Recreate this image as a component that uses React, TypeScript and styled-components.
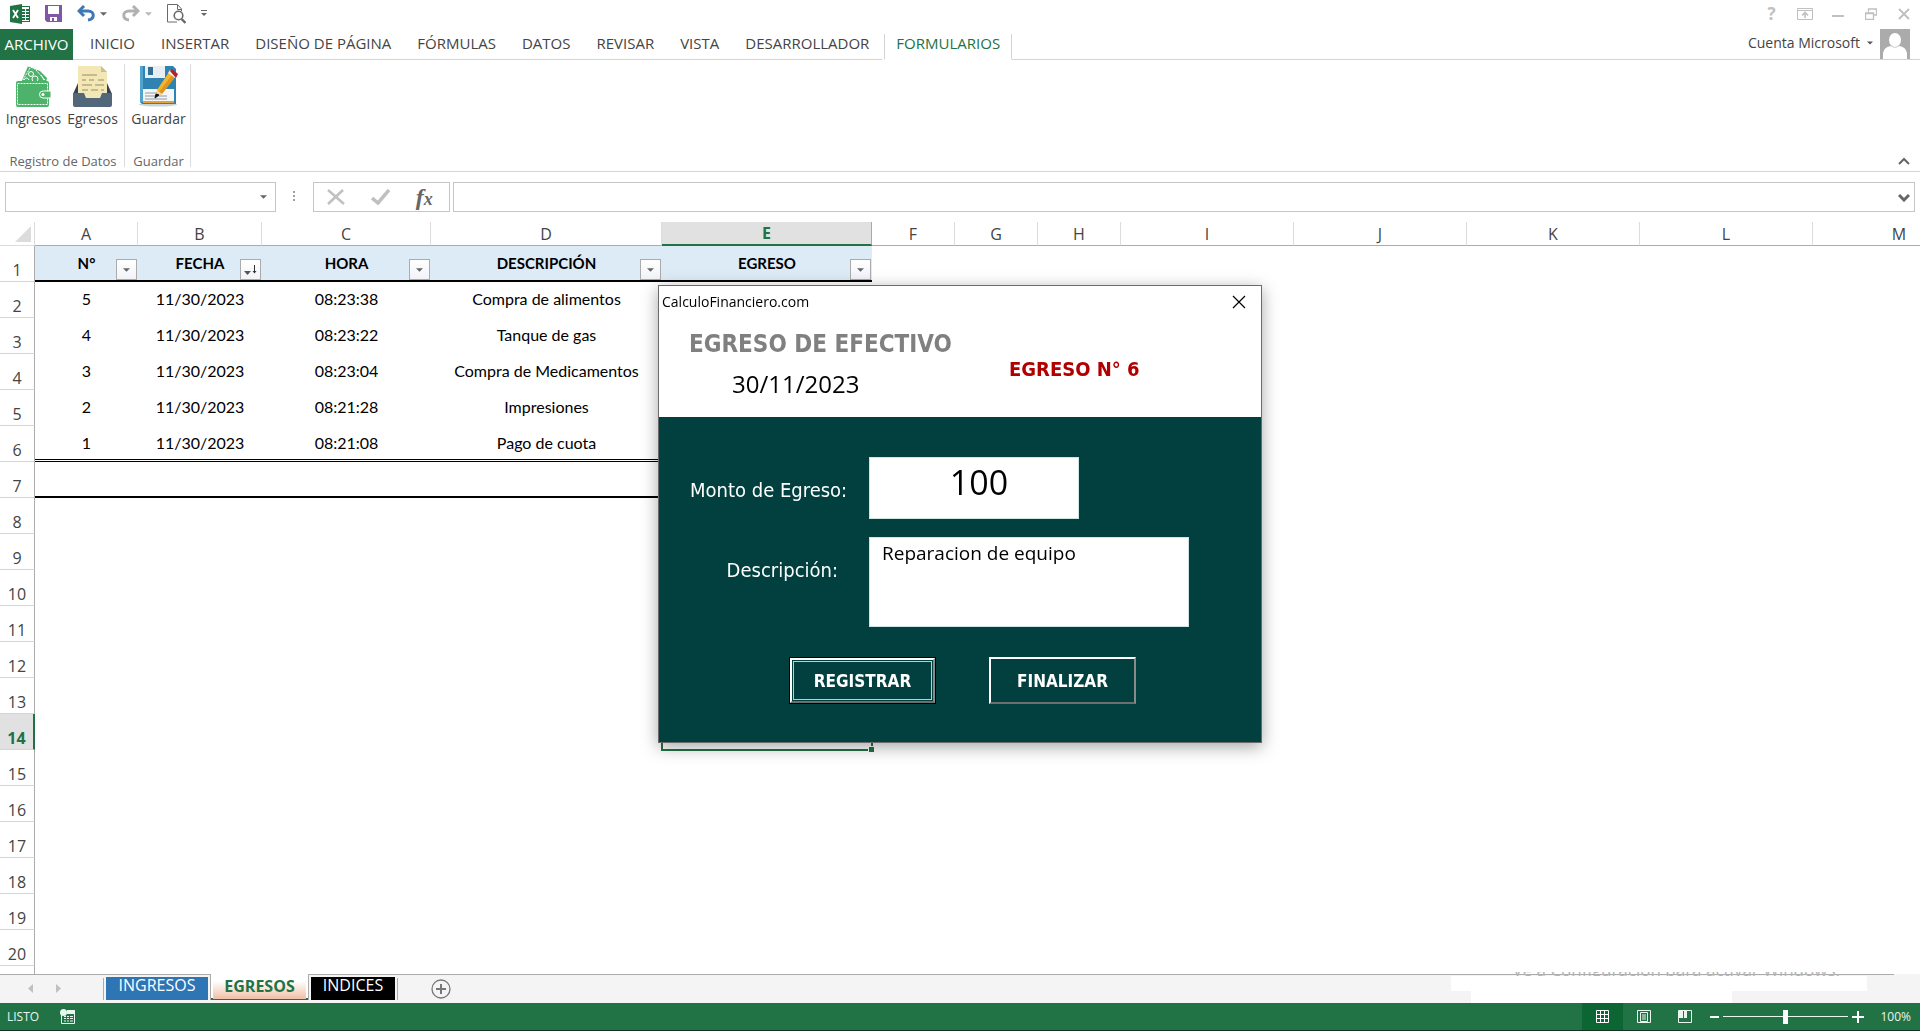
import React from "react";
import styled, { createGlobalStyle, css } from "styled-components";

const ui = `"Open Sans", "Noto Sans", sans-serif`;
const cellFont = `Lato, "Open Sans", sans-serif`;
const formFont = `"DejaVu Sans Condensed", "Noto Sans", sans-serif`;
const green = "#217346";
const teal = "#023f3f";

const Global = createGlobalStyle`
  *, *::before, *::after { box-sizing: border-box; }
  body { margin: 0; background: #fff; font-family: ${ui}; color: #444; overflow: hidden; }
  button, input, textarea { font: inherit; color: inherit; margin: 0; padding: 0; border: 0; background: none; border-radius: 0; outline: 0; }
  svg { display: block; flex: none; }
`;

const Window = styled.div`
  display: flex;
  flex-direction: column;
  height: 100vh;
  min-width: 1300px;
`;

/* ---------- title bar ---------- */
const TitleBar = styled.header`
  display: flex;
  justify-content: space-between;
  height: 29px;
  padding: 0 0 0 8px;
  flex: none;
`;
const QuickAccess = styled.div`
  display: flex;
  align-items: center;
  padding: 0 0 2px 2px;
  gap: 15px;
`;
const Pair = styled.div`
  display: flex;
  align-items: center;
  gap: 5px;
`;
const WindowButtons = styled.div`
  display: flex;
  align-items: center;
  padding-bottom: 2px;
  color: #c0c0c0;
`;
const IconButton = styled.button<{ $w?: number }>`
  display: grid;
  place-items: center;
  width: ${(p) => (p.$w ? `${p.$w}px` : "auto")};
  height: 27px;
`;
const HelpMark = styled.span`
  font: 700 17px/20px ${ui};
`;

/* ---------- ribbon tabs ---------- */
const TabRow = styled.nav`
  display: flex;
  height: 31px;
  flex: none;
`;
const FileTab = styled.button`
  width: 73px;
  background: ${green};
  color: #fff;
  font-size: 15px;
  line-height: 28px;
  padding-bottom: 2px;
`;
const TabList = styled.div`
  display: flex;
`;
const RibbonTab = styled.button<{ $active?: boolean }>`
  padding: 0 13px 2px;
  font-size: 15px;
  line-height: 28px;
  border-bottom: 1px solid #d4d4d4;
  ${(p) =>
    p.$active &&
    css`
      color: ${green};
      border: 1px solid #d4d4d4;
      border-top: 0;
      border-bottom-color: transparent;
      margin: 5px 0 0 2px;
      line-height: 18px;
      padding: 0 11px 7px;
    `}
`;
const TabLine = styled.div`
  flex: 1;
  display: flex;
  justify-content: flex-end;
  align-items: center;
  gap: 7px;
  padding-right: 10px;
  border-bottom: 1px solid #d4d4d4;
`;
const TabGap = styled.div`
  width: 4px;
  border-bottom: 1px solid #d4d4d4;
`;
const Account = styled.button`
  display: flex;
  align-items: center;
  gap: 7px;
  font-size: 14px;
  line-height: 20px;
  padding-bottom: 2px;
`;

/* ---------- ribbon body ---------- */
const Ribbon = styled.section`
  display: flex;
  height: 112px;
  flex: none;
  padding-top: 4px;
  border-bottom: 1px solid #d4d4d4;
`;
const Group = styled.div`
  display: flex;
  flex-direction: column;
  justify-content: space-between;
  height: 103px;
  padding: 2px 2px 0 4px;
  border-right: 1px solid #dcdcdc;
`;
const GroupButtons = styled.div`
  display: flex;
`;
const BigButton = styled.button`
  display: flex;
  flex-direction: column;
  align-items: center;
  gap: 2px;
  width: 59px;
  font-size: 14px;
  line-height: 20px;
`;
const GroupLabel = styled.div`
  font-size: 13px;
  line-height: 12px;
  color: #666;
  text-align: center;
`;
const RibbonEnd = styled.div`
  flex: 1;
  display: flex;
  align-items: flex-end;
  justify-content: flex-end;
  padding: 0 10px 6px 0;
`;

/* ---------- formula bar ---------- */
const FormulaBar = styled.section`
  display: flex;
  height: 50px;
  flex: none;
  padding: 10px 5px;
`;
const Box = styled.div<{ $w?: number }>`
  display: flex;
  align-items: center;
  height: 30px;
  border: 1px solid #c6c6c6;
  ${(p) => (p.$w ? `width: ${p.$w}px;` : "flex: 1; margin-left: 3px;")}
  input { flex: 1; min-width: 0; height: 28px; padding: 0 6px; font-size: 15px; }
  > button:last-child { margin-right: ${(p) => (p.$w ? 4 : 3)}px; }
`;
const Dots = styled.div`
  display: flex;
  flex-direction: column;
  gap: 2px;
  width: 37px;
  align-items: center;
  padding: 9px 1px 0 0;
  i { width: 2px; height: 2px; background: #a0a0a0; }
`;
const Fx = styled.span`
  font: italic 700 24px/26px "Liberation Serif", serif;
  color: #666;
  small { font-size: 18px; }
`;

/* ---------- sheet ---------- */
const SheetArea = styled.main`
  flex: 1;
  min-height: 0;
  overflow: hidden;
`;
const Grid = styled.table`
  table-layout: fixed;
  width: 1986px;
  border-collapse: separate;
  border-spacing: 0;
  td, th { padding: 0; }
`;
const ColHead = styled.th<{ $on?: boolean }>`
  height: 24px;
  font: 400 16px/22px ${ui};
  border-bottom: 1px solid #ababab;
  border-right: 1px solid #dcdcdc;
  ${(p) =>
    p.$on &&
    css`
      background: #e1e1e1;
      color: ${green};
      font-weight: 700;
      border-bottom: 2px solid ${green};
      border-right-color: #ababab;
      line-height: 21px;
    `}
`;
const Corner = styled.td`
  height: 24px;
  border-bottom: 1px solid #dcdcdc;
  border-right: 1px solid #dcdcdc;
  svg { margin: 0 0 0 15px; }
`;
const RowHead = styled.th<{ $on?: boolean }>`
  height: 36px;
  vertical-align: bottom;
  font: 400 16px/21px ${ui};
  border-bottom: 1px solid #d4d4d4;
  border-right: 1px solid #ababab;
  ${(p) =>
    p.$on &&
    css`
      background: #e1e1e1;
      color: ${green};
      font-weight: 700;
      border-right: 2px solid ${green};
    `}
`;
const Cell = styled.td<{ $line?: string }>`
  && { padding-bottom: ${(p) => (p.$line ? 0 : 2)}px; }
  height: 36px;
  text-align: center;
  font: 400 16px/20px ${cellFont};
  color: #000;
  border-bottom: ${(p) => p.$line || "0"};
`;
const TitleCell = styled.td`
  position: relative;
  height: 36px;
  text-align: center;
  background: #ddebf7;
  border-bottom: 2px solid #000;
  font: 700 15px/20px ${cellFont};
  color: #000;
`;
const FilterButton = styled.button`
  position: absolute;
  right: 1px;
  bottom: 0;
  display: grid;
  place-items: center;
  width: 21px;
  height: 21px;
  border: 1px solid #ababab;
  background: linear-gradient(#fff, #f1f3f8);
`;
const SelectedCell = styled.td`
  position: relative;
  height: 36px;
  &::before { content: ""; position: absolute; inset: -2px -1px -1px -1px; border: 2px solid ${green}; }
  &::after {
    content: ""; position: absolute; right: -3px; bottom: -3px; width: 7px; height: 7px;
    background: ${green}; border: 1px solid #fff;
  }
`;

/* ---------- sheet tabs ---------- */
const TabStrip = styled.div`
  position: relative;
  display: flex;
  flex: none;
  height: 29px;
  background: #f4f4f5;
`;
const StripMain = styled.div`
  flex: 1;
  display: flex;
  border-top: 1px solid #ababab;
  margin-right: 26px;
`;
const Arrows = styled.div`
  display: flex;
  width: 103px;
  padding-left: 16px;
  button { width: 28px; height: 27px; display: grid; place-items: center; }
`;
const Divider = styled.span`
  width: 1px;
  height: 22px;
  margin-top: 3px;
  background: #ababab;
`;
const SheetTab = styled.button<{ $bg: string; $w: number }>`
  width: ${(p) => p.$w}px;
  height: 23px;
  margin: 2px 2px 0;
  padding-bottom: 6px;
  background: ${(p) => p.$bg};
  color: #fff;
  font-size: 16px;
  line-height: 17px;
`;
const ActiveTab = styled.button`
  width: 99px;
  height: 26px;
  margin-top: -1px;
  padding: 3px 2px 1px;
  background: #fff;
  border: solid #ababab;
  border-width: 0 1px;
  box-shadow: inset 0 -2px ${green};
  color: ${green};
  font-weight: 700;
  font-size: 16px;
  span { display: block; height: 21px; line-height: 16px; background: linear-gradient(#fff 15%, #f0bfa6); }
`;
const AddSheet = styled.button`
  margin-left: 33px;
  height: 27px;
`;
const Patch = styled.div<{ $right: number; $top: number; $w: number; $h: number }>`
  position: absolute;
  right: ${(p) => p.$right}px;
  top: ${(p) => p.$top}px;
  width: ${(p) => p.$w}px;
  height: ${(p) => p.$h}px;
  background: #fff;
`;
const Notice = styled.div`
  position: absolute;
  right: 80px;
  top: -2px;
  height: 4px;
  overflow: hidden;
  display: flex;
  align-items: flex-end;
  font-size: 17px;
  line-height: 12px;
  color: #b4b4b4;
  white-space: nowrap;
`;

/* ---------- status bar ---------- */
const StatusBar = styled.footer`
  display: flex;
  align-items: center;
  flex: none;
  height: 28px;
  padding: 0 9px 0 7px;
  background: ${green};
  border-bottom: 1px solid #16301f;
  color: #e9f5ee;
  font-size: 12px;
`;
const StatusLeft = styled.div`
  display: flex;
  align-items: center;
  gap: 21px;
  flex: 1;
`;
const ViewButton = styled.button<{ $on?: boolean }>`
  display: grid;
  place-items: center;
  width: 41px;
  height: 27px;
  background: ${(p) => (p.$on ? "#0b6634" : "none")};
`;
const Zoom = styled.div`
  display: flex;
  align-items: center;
  gap: 4px;
  padding-left: 5px;
  label { width: 43px; text-align: right; }
  input { appearance: none; width: 125px; height: 14px; background: linear-gradient(#e9f5ee, #e9f5ee) center / 100% 1px no-repeat; }
  input::-webkit-slider-thumb { appearance: none; width: 5px; height: 14px; background: #fff; }
`;

/* ---------- dialog ---------- */
const Overlay = styled.div`
  position: fixed;
  inset: 0;
  display: grid;
  place-items: center;
  padding-bottom: 3px;
`;
const Dialog = styled.section`
  width: 604px;
  background: #fff;
  border: 1px solid #6b6b6b;
  box-shadow: 0 4px 16px rgba(0, 0, 0, 0.35);
  font-family: ${formFont};
  color: #000;
`;
const DialogBar = styled.div`
  display: flex;
  justify-content: space-between;
  align-items: center;
  height: 31px;
  padding: 0 15px 0 3px;
  font: 14px/20px ${ui};
`;
const DialogHead = styled.div`
  display: grid;
  grid-template-columns: 320px 1fr;
  align-items: center;
  height: 100px;
  padding: 0 30px 8px;
`;
const DialogTitle = styled.h1`
  margin: 2px 0 8px;
  font-size: 24px;
  line-height: 32px;
  font-weight: 700;
  color: #808080;
  white-space: nowrap;
`;
const DialogDate = styled.div`
  padding-left: 43px;
  font: 24px/32px ${ui};
`;
const DialogNumber = styled.div`
  font-size: 20px;
  line-height: 26px;
  font-weight: 700;
  color: #b00000;
  padding-top: 12px;
`;
const Form = styled.form`
  display: flex;
  flex-direction: column;
  gap: 18px;
  padding: 40px 31px 38px;
  background: ${teal};
`;
const Field = styled.div<{ $top?: boolean }>`
  display: grid;
  grid-template-columns: 179px 1fr;
  align-items: ${(p) => (p.$top ? "start" : "center")};
  label {
    color: #fff;
    font-size: 20px;
    line-height: 26px;
    text-align: right;
    white-space: nowrap;
    padding: ${(p) => (p.$top ? "20px 31px 0 0" : "3px 25px 0 0")};
  }
`;
const Amount = styled.input`
  width: 210px;
  height: 62px;
  padding: 0 0 12px 10px;
  background: #fff;
  border: 1px solid #cfe5e3;
  text-align: center;
  font: 34px/48px ${ui};
`;
const Description = styled.textarea`
  width: 320px;
  height: 90px;
  padding: 2px 12px;
  background: #fff;
  border: 1px solid #cfe5e3;
  resize: none;
  font: 19px/26px ${ui};
`;
const Actions = styled.div`
  display: flex;
  gap: 53px;
  padding: 12px 0 0 99px;
`;
const ActionButton = styled.button<{ $focus?: boolean }>`
  position: relative;
  width: 147px;
  height: 47px;
  color: #fff;
  font-size: 17px;
  font-weight: 700;
  border: 2px solid;
  border-color: #fff #8a8a8a #6e6e6e #fff;
  ${(p) =>
    p.$focus &&
    css`
      outline: 1px solid #000;
      outline-offset: -1px;
      border-width: 3px;
      &::after { content: ""; position: absolute; inset: 1px; border: 1px solid #c9c9c9; }
    `}
`;

const Caret = ({ c = "#666", s = 7 }: { c?: string; s?: number }) => (
  <svg width={s} height="4" viewBox="0 0 8 4"><path d="M0 0h8L4 4z" fill={c} /></svg>
);

const ExcelLogo = () => (
  <svg width="20" height="20" viewBox="0 0 20 20">
    <rect x="10.500" y="2.500" width="9" height="15" fill="#fff" stroke={green} />
    <path d="M12 5h3v2h-3zM16 5h3v2h-3zM12 8h3v2h-3zM16 8h3v2h-3zM12 11h3v2h-3zM16 11h3v2h-3zM12 14h3v2h-3zM16 14h3v2h-3z" fill={green} />
    <path d="M0 2 12 0v20L0 18z" fill={green} />
    <path d="m3 6 5 8M8 6l-5 8" stroke="#fff" strokeWidth="1.800" fill="none" />
  </svg>
);
const SaveIcon = () => (
  <svg width="17" height="17" viewBox="0 0 17 17">
    <path d="M0 0h17v17H2l-2-2z" fill="#8157a5" />
    <path d="M3 1h11v8H3z" fill="#fff" />
    <path d="M5 12h7v4H5z" fill="#fff" /><path d="M7 13h2v3H7z" fill="#8157a5" />
  </svg>
);
const UndoIcon = ({ c, flip }: { c: string; flip?: boolean }) => (
  <svg width="18" height="17" viewBox="0 0 18 17">
    <g transform={flip ? "translate(18 0) scale(-1 1)" : undefined}>
      <path d="M2 6h9c7 0 7 8 0 9" fill="none" stroke={c} strokeWidth="3" />
      <path d="M7 1 2 6l5 5" fill="none" stroke={c} strokeWidth="3" />
    </g>
  </svg>
);
const PreviewIcon = () => (
  <svg width="19" height="20" viewBox="0 0 19 20" fill="none" stroke="#6a6a6a">
    <path d="M14.500 7V5l-4-4.500h-10v17.500H10M10.500 1v4.500h4" />
    <circle cx="11.500" cy="11.500" r="4.300" strokeWidth="1.600" /><path d="m14.500 15 4 4" strokeWidth="2.400" />
  </svg>
);

const WalletIcon = () => (
  <svg width="35" height="41" viewBox="0 0 35 41">
    <path d="M12 0 24 5 31 12 30 17H5z" fill="#4db36a" />
    <path d="m20 4 9 10" stroke="#fff" strokeDasharray="2 1" />
    <path d="M14 2 7 14M12 0l9 4" stroke="#fff" strokeDasharray="2 1" />
    <circle cx="15" cy="8" r="2.500" fill="none" stroke="#fff" /><circle cx="19" cy="13" r="3" fill="none" stroke="#fff" /><path d="M8 14q3-4 5 0M25 9l3 5" stroke="#fff" fill="none" />
    <rect x="0" y="15" width="33" height="26" rx="2" fill="#4db36a" />
    <rect x="1.500" y="17.500" width="30" height="21" fill="none" stroke="#fff" strokeDasharray="2 1" />
    <path d="M35 25h-8a3.500 3.500 0 0 0 0 7h8z" fill="#4db36a" stroke="#fff" />
    <circle cx="27" cy="28.500" r="1.500" fill="#fff" />
  </svg>
);
const TrayIcon = () => (
  <svg width="39" height="41" viewBox="0 0 39 41">
    <path d="M5 17h29l5 11H0z" fill="#36424f" />
    <path d="M5 0h23l6 6v26H5z" fill="#f3e8b5" /><path d="M28 0v6h6z" fill="#c9bf92" />
    <path d="M9 9h15M9 14h4m3 0h5m4 0h6M9 19h10m3 0h9M9 24h6m3 0h7m3 0h3" stroke="#b5aa80" strokeWidth="1.400" />
    <path d="M0 27h11l2 5h14l2-5h10v12a2 2 0 0 1-2 2H2a2 2 0 0 1-2-2z" fill="#52677a" />
  </svg>
);
const DiskIcon = () => (
  <svg width="39" height="41" viewBox="0 0 39 41">
    <ellipse cx="19" cy="38.500" rx="19" ry="2" fill="#c9d3da" />
    <path d="M1 0h33l3 3v35H3l-2-2z" fill="#2f83b0" />
    <path d="M1 0h3v36H1z" fill="#51a5cd" />
    <path d="M6 0h20v12H6z" fill="#e8eef2" /><path d="M9 1h5v8H9z" fill="#2f6f98" />
    <path d="M4 23h31v14H4z" fill="#f4f6f8" /><path d="M4 35h31v2H4z" fill="#e0a03c" />
    <path d="M6 27h14M6 30h22M6 33h22" stroke="#8e99a2" />
    <path d="m30 6 6 5-13 17-6 3 1-7z" fill="#f4b52e" /><path d="m33 9 3 2-13 17-3-2z" fill="#dd9420" />
    <path d="m18 24 5 4-6 3z" fill="#f3d3a3" /><path d="m17 28 3 1-4 3z" fill="#111" stroke="#111" />
    <path d="m29 7 2-3 7 6-2 2z" fill="#f3e5e2" /><path d="m31 5 2-2 6 5-2 4z" fill="#b3202a" />
  </svg>
);
const Avatar = () => (
  <svg width="30" height="30" viewBox="0 0 30 30">
    <path d="M0 0h30v30H0z" fill="#ababab" />
    <ellipse cx="15" cy="11" rx="6" ry="7" fill="#fff" />
    <path d="M3 30V24q1-6 8-7 4 3 8 0 7 1 8 7v6z" fill="#fff" />
  </svg>
);

const tabs = ["INICIO", "INSERTAR", "DISEÑO DE PÁGINA", "FÓRMULAS", "DATOS", "REVISAR", "VISTA", "DESARROLLADOR"];
const columns: [string, number][] = [
  ["A", 103], ["B", 124], ["C", 169], ["D", 231], ["E", 210], ["F", 83], ["G", 83],
  ["H", 83], ["I", 173], ["J", 173], ["K", 173], ["L", 173], ["M", 173],
];
const titles = ["N°", "FECHA", "HORA", "DESCRIPCIÓN", "EGRESO"];
const records = [
  ["5", "11/30/2023", "08:23:38", "Compra de alimentos", ""],
  ["4", "11/30/2023", "08:23:22", "Tanque de gas", ""],
  ["3", "11/30/2023", "08:23:04", "Compra de Medicamentos", ""],
  ["2", "11/30/2023", "08:21:28", "Impresiones", ""],
  ["1", "11/30/2023", "08:21:08", "Pago de cuota", ""],
];
const emptyRow = ["", "", "", "", ""];
const rowNumbers = Array.from({ length: 20 }, (_, i) => i + 1);

function SheetRow({ n }: { n: number }) {
  const values = records[n - 2] || emptyRow;
  const line = n === 6 ? "3px double #000" : n === 7 ? "2px solid #000" : undefined;
  return (
    <tr>
      <RowHead scope="row" $on={n === 14}>{n}</RowHead>
      {n === 1
        ? titles.map((t, i) => (
            <TitleCell key={t}>
              {t}
              <FilterButton aria-label={`Filtrar ${t}`}>
                {i === 1 ? (
                  <svg width="15" height="12" viewBox="0 0 15 12"><path d="M1 7h7l-3.500 4z" fill="#555" /><path d="M11.500 1v7" stroke="#333" /><path d="M9.500 7h4l-2 2.500z" fill="#333" /></svg>
                ) : (
                  <Caret />
                )}
              </FilterButton>
            </TitleCell>
          ))
        : values.map((v, i) => (n === 14 && i === 4 ? <SelectedCell key={i} /> : <Cell key={i} $line={line}>{v}</Cell>))}
      <td colSpan={8} />
    </tr>
  );
}

export default function App() {
  return (
    <Window>
      <Global />
      <TitleBar>
        <QuickAccess>
          <ExcelLogo />
          <IconButton aria-label="Guardar"><SaveIcon /></IconButton>
          <Pair>
            <IconButton aria-label="Deshacer"><UndoIcon c="#3e78b5" /></IconButton>
            <Caret />
          </Pair>
          <Pair>
            <IconButton aria-label="Rehacer"><UndoIcon c="#b1b1b1" flip /></IconButton>
            <Caret c="#b8b8b8" />
          </Pair>
          <IconButton aria-label="Vista previa"><PreviewIcon /></IconButton>
          <IconButton aria-label="Personalizar">
            <svg width="6" height="7" viewBox="0 0 6 7"><path d="M0 .500h6" stroke="#666" /><path d="M0 3h6L3 6z" fill="#666" /></svg>
          </IconButton>
        </QuickAccess>
        <WindowButtons>
          <IconButton $w={33} aria-label="Ayuda"><HelpMark>?</HelpMark></IconButton>
          <IconButton $w={33} aria-label="Opciones de la cinta">
            <svg width="16" height="12" viewBox="0 0 16 12" fill="none" stroke="currentColor"><path d="M.500.500h15v11H.500zM0 2.500h16" /><path d="M8 10V5M5 7.500l3-3 3 3" strokeWidth="1.600" /></svg>
          </IconButton>
          <IconButton $w={33} aria-label="Minimizar"><svg width="12" height="8"><path d="M0 5h12v2H0z" fill="currentColor" /></svg></IconButton>
          <IconButton $w={33} aria-label="Restaurar">
            <svg width="12" height="12" fill="none" stroke="currentColor"><path d="M.500 5.500h8v6h-8zM0 5h9M3.500 4V1h8v6H9" strokeWidth="1.300" /></svg>
          </IconButton>
          <IconButton $w={33} aria-label="Cerrar">
            <svg width="12" height="12"><path d="m1 1 10 10M11 1 1 11" stroke="currentColor" strokeWidth="2" /></svg>
          </IconButton>
        </WindowButtons>
      </TitleBar>

      <TabRow>
        <FileTab>ARCHIVO</FileTab>
        <TabGap />
        <TabList>
          {tabs.map((t) => <RibbonTab key={t}>{t}</RibbonTab>)}
          <RibbonTab $active>FORMULARIOS</RibbonTab>
        </TabList>
        <TabLine>
          <Account>Cuenta Microsoft <Caret c="#555" s={6} /></Account>
          <Avatar />
        </TabLine>
      </TabRow>

      <Ribbon>
        <Group>
          <GroupButtons>
            <BigButton><WalletIcon />Ingresos</BigButton>
            <BigButton><TrayIcon />Egresos</BigButton>
          </GroupButtons>
          <GroupLabel>Registro de Datos</GroupLabel>
        </Group>
        <Group>
          <GroupButtons><BigButton><DiskIcon />Guardar</BigButton></GroupButtons>
          <GroupLabel>Guardar</GroupLabel>
        </Group>
        <RibbonEnd>
          <button aria-label="Contraer la cinta"><svg width="12" height="8"><path d="m1 7 5-5 5 5" fill="none" stroke="#666" strokeWidth="2" /></svg></button>
        </RibbonEnd>
      </Ribbon>

      <FormulaBar>
        <Box $w={271}>
          <input aria-label="Cuadro de nombres" />
          <IconButton $w={16} aria-label="Abrir nombres"><Caret /></IconButton>
        </Box>
        <Dots><i /><i /><i /></Dots>
        <Box $w={137}>
          <IconButton $w={45} aria-label="Cancelar"><svg width="18" height="16"><path d="m1 1 16 14M16 1 1 15" stroke="#c0c0c0" strokeWidth="2.500" /></svg></IconButton>
          <IconButton $w={46} aria-label="Introducir"><svg width="19" height="16"><path d="m1 9 6 5L18 1" fill="none" stroke="#c0c0c0" strokeWidth="3.500" /></svg></IconButton>
          <IconButton $w={42} aria-label="Insertar función"><Fx>f<small>x</small></Fx></IconButton>
        </Box>
        <Box>
          <input aria-label="Barra de fórmulas" />
          <IconButton $w={14} aria-label="Expandir"><svg width="12" height="9"><path d="m1 2 5 5 5-5" fill="none" stroke="#666" strokeWidth="3" /></svg></IconButton>
        </Box>
      </FormulaBar>

      <SheetArea>
        <Grid>
          <colgroup>
            <col width={35} />
            {columns.map(([c, w]) => <col key={c} width={w} />)}
          </colgroup>
          <thead>
            <tr>
              <Corner><svg width="16" height="16"><path d="M16 0v16H0z" fill="#dcdcdc" /></svg></Corner>
              {columns.map(([c]) => <ColHead key={c} scope="col" $on={c === "E"}>{c}</ColHead>)}
            </tr>
          </thead>
          <tbody>
            {rowNumbers.map((n) => <SheetRow key={n} n={n} />)}
            <tr><RowHead /></tr>
          </tbody>
        </Grid>
      </SheetArea>

      <TabStrip>
        <StripMain>
          <Arrows>
            <button aria-label="Hoja anterior"><svg width="5" height="9"><path d="M5 0v9L0 4.500z" fill="#c0c0c0" /></svg></button>
            <button aria-label="Hoja siguiente"><svg width="5" height="9"><path d="M0 0v9l5-4.500z" fill="#c0c0c0" /></svg></button>
          </Arrows>
          <Divider />
          <SheetTab $bg="#2e75b6" $w={102}>INGRESOS</SheetTab>
          <ActiveTab><span>EGRESOS</span></ActiveTab>
          <SheetTab $bg="#000" $w={84}>INDICES</SheetTab>
          <Divider />
          <AddSheet aria-label="Hoja nueva">
            <svg width="20" height="20" fill="none" stroke="#777"><circle cx="10" cy="10" r="9" strokeWidth="1.300" /><path d="M10 5v10M5 10h10" strokeWidth="2" /></svg>
          </AddSheet>
        </StripMain>
        <Patch $right={53} $top={2} $w={416} $h={15} />
        <Patch $right={188} $top={17} $w={261} $h={12} />
        <Notice>Ve a Configuración para activar Windows.</Notice>
      </TabStrip>

      <StatusBar>
        <StatusLeft>
          LISTO
          <svg width="15" height="15" viewBox="0 0 15 15"><path d="M1.500 3v11.500h13V1.500H7" fill="none" stroke="#e9f5ee" /><path d="M7 1h8v4H7z" fill="#e9f5ee" /><circle cx="3.500" cy="3.500" r="3.500" fill="#e9f5ee" /><path d="M4 7.500h2m1 0h2m1 0h3M4 9.500h2m1 0h2m1 0h3M4 12h2m1 0h2m1 0h3" stroke="#e9f5ee" strokeWidth="1.200" /></svg>
        </StatusLeft>
        <ViewButton $on aria-label="Normal"><svg width="14" height="14" fill="none" stroke="#fff"><path d="M.500.500h12v12H.500zM4.500 0v13M8.500 0v13M0 4.500h13M0 8.500h13" /></svg></ViewButton>
        <ViewButton aria-label="Diseño de página"><svg width="14" height="14" fill="none" stroke="#e9f5ee"><path d="M.500.500h13v12H.500zM3.500 2.500h7v9h-7zM5 5h4M5 7h4M5 9h4" /></svg></ViewButton>
        <ViewButton aria-label="Salto de página"><svg width="14" height="14"><path d="M.500.500h13v12H.500z" fill="none" stroke="#e9f5ee" /><path d="M1 1h4v7H1zM6 1h3v7H6z" fill="#e9f5ee" /></svg></ViewButton>
        <Zoom>
          <button aria-label="Alejar"><svg width="9" height="12"><path d="M0 5h9v2H0z" fill="#fff" /></svg></button>
          <input id="zoom" type="range" min={10} max={190} defaultValue={100} />
          <button aria-label="Acercar"><svg width="12" height="12"><path d="M0 5h12v2H0zM5 0h2v12H5z" fill="#fff" /></svg></button>
          <label htmlFor="zoom">100%</label>
        </Zoom>
      </StatusBar>

      <Overlay>
        <Dialog role="dialog" aria-label="CalculoFinanciero.com">
          <DialogBar>
            CalculoFinanciero.com
            <button aria-label="Cerrar ventana"><svg width="14" height="14"><path d="m1 1 12 12M13 1 1 13" stroke="#000" strokeWidth="1.200" /></svg></button>
          </DialogBar>
          <DialogHead>
            <div>
              <DialogTitle>EGRESO DE EFECTIVO</DialogTitle>
              <DialogDate>30/11/2023</DialogDate>
            </div>
            <DialogNumber>EGRESO N° 6</DialogNumber>
          </DialogHead>
          <Form onSubmit={(e) => e.preventDefault()}>
            <Field>
              <label htmlFor="monto">Monto de Egreso:</label>
              <Amount id="monto" defaultValue="100" />
            </Field>
            <Field $top>
              <label htmlFor="descripcion">Descripción:</label>
              <Description id="descripcion" defaultValue="Reparacion de equipo" spellCheck={false} />
            </Field>
            <Actions>
              <ActionButton $focus type="submit">REGISTRAR</ActionButton>
              <ActionButton type="button">FINALIZAR</ActionButton>
            </Actions>
          </Form>
        </Dialog>
      </Overlay>
    </Window>
  );
}
